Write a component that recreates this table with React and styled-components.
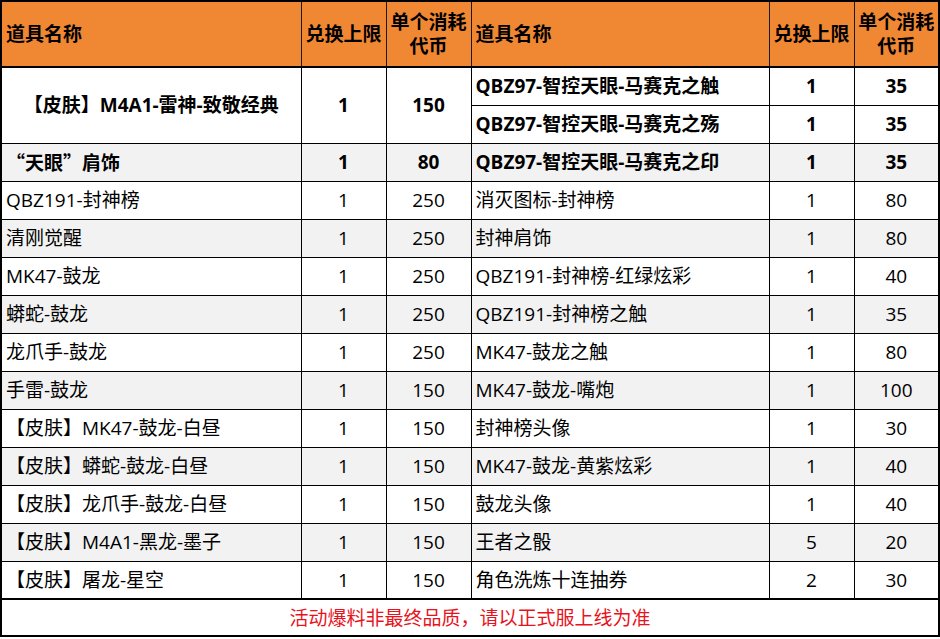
import React from 'react';
import styled, { createGlobalStyle } from 'styled-components';

const GlobalStyle = createGlobalStyle`
  html, body {
    margin: 0;
    padding: 0;
    background: #ffffff;
  }
  body {
    font-family: "Open Sans", "Noto Sans CJK SC", sans-serif;
    color: #000;
  }
`;

const Table = styled.table`
  width: 938px;
  table-layout: fixed;
  border-collapse: collapse;
  border: 2px solid #000;
  font-size: 19px;
  line-height: 22px;
`;

const HeadCell = styled.th`
  background-color: #ef8733;
  border: 1px solid #1a1a1a;
  border-bottom: 2px solid #000;
  height: 64px;
  padding: 0 ${props => (props.$left ? '4px' : '1px')};
  font-weight: 700;
  text-align: ${props => (props.$left ? 'left' : 'center')};
  vertical-align: middle;
  line-height: 24px;
  white-space: nowrap;
`;

const Row = styled.tr`
  height: 38px;
`;

const Cell = styled.td`
  border: 1px solid #000;
  padding: 0 ${props => (props.$center ? '2px' : '4px')};
  background-color: ${props => (props.$gray ? '#f2f2f2' : '#ffffff')};
  font-weight: ${props => (props.$bold ? 700 : 400)};
  text-align: ${props => (props.$center || props.$mid ? 'center' : 'left')};
  vertical-align: middle;
  white-space: nowrap;
  overflow: hidden;
`;

// full-width CJK quotes, as in the source sheet
const CjkText = styled.span`
  font-family: "Noto Sans CJK SC", sans-serif;
`;

const NoteRow = styled.tr`
  height: 37px;
`;

const NoteCell = styled.td`
  border-top: 2px solid #000;
  color: #e8121c;
  text-align: center;
  vertical-align: middle;
  font-size: 19px;
`;

const left = [
  { name: '【皮肤】M4A1-雷神-致敬经典', limit: 1, cost: 150, bold: true, span: 2 },
  null,
  { name: '“天眼”肩饰', limit: 1, cost: 80, bold: true, cjk: true },
  { name: 'QBZ191-封神榜', limit: 1, cost: 250 },
  { name: '清刚觉醒', limit: 1, cost: 250 },
  { name: 'MK47-鼓龙', limit: 1, cost: 250 },
  { name: '蟒蛇-鼓龙', limit: 1, cost: 250 },
  { name: '龙爪手-鼓龙', limit: 1, cost: 250 },
  { name: '手雷-鼓龙', limit: 1, cost: 150 },
  { name: '【皮肤】MK47-鼓龙-白昼', limit: 1, cost: 150 },
  { name: '【皮肤】蟒蛇-鼓龙-白昼', limit: 1, cost: 150 },
  { name: '【皮肤】龙爪手-鼓龙-白昼', limit: 1, cost: 150 },
  { name: '【皮肤】M4A1-黑龙-墨子', limit: 1, cost: 150 },
  { name: '【皮肤】屠龙-星空', limit: 1, cost: 150 },
];

const right = [
  { name: 'QBZ97-智控天眼-马赛克之触', limit: 1, cost: 35, bold: true },
  { name: 'QBZ97-智控天眼-马赛克之殇', limit: 1, cost: 35, bold: true },
  { name: 'QBZ97-智控天眼-马赛克之印', limit: 1, cost: 35, bold: true },
  { name: '消灭图标-封神榜', limit: 1, cost: 80 },
  { name: '封神肩饰', limit: 1, cost: 80 },
  { name: 'QBZ191-封神榜-红绿炫彩', limit: 1, cost: 40 },
  { name: 'QBZ191-封神榜之触', limit: 1, cost: 35 },
  { name: 'MK47-鼓龙之触', limit: 1, cost: 80 },
  { name: 'MK47-鼓龙-嘴炮', limit: 1, cost: 100 },
  { name: '封神榜头像', limit: 1, cost: 30 },
  { name: 'MK47-鼓龙-黄紫炫彩', limit: 1, cost: 40 },
  { name: '鼓龙头像', limit: 1, cost: 40 },
  { name: '王者之骰', limit: 5, cost: 20 },
  { name: '角色洗炼十连抽券', limit: 2, cost: 30 },
];

const renderItem = (item, gray, key) => {
  if (!item) return null;
  return [
    <Cell key={key + 'n'} rowSpan={item.span} $gray={gray} $bold={item.bold} $mid={item.span > 1}>
      {item.cjk ? <CjkText>{item.name}</CjkText> : item.name}
    </Cell>,
    <Cell key={key + 'l'} rowSpan={item.span} $gray={gray} $bold={item.bold} $center>
      {item.limit}
    </Cell>,
    <Cell key={key + 'c'} rowSpan={item.span} $gray={gray} $bold={item.bold} $center>
      {item.cost}
    </Cell>,
  ];
};

const App = () => (
  <>
    <GlobalStyle />
    <Table>
      <colgroup>
        <col style={{ width: 300 }} />
        <col style={{ width: 85 }} />
        <col style={{ width: 85 }} />
        <col style={{ width: 298 }} />
        <col style={{ width: 85 }} />
        <col style={{ width: 85 }} />
      </colgroup>
      <thead>
        <tr>
          <HeadCell $left>道具名称</HeadCell>
          <HeadCell>兑换上限</HeadCell>
          <HeadCell>单个消耗<br />代币</HeadCell>
          <HeadCell $left>道具名称</HeadCell>
          <HeadCell>兑换上限</HeadCell>
          <HeadCell>单个消耗<br />代币</HeadCell>
        </tr>
      </thead>
      <tbody>
        {right.map((r, i) => {
          const gray = i >= 2 && i % 2 === 0;
          return (
            <Row key={i}>
              {renderItem(left[i], gray, 'L' + i)}
              {renderItem(r, gray, 'R' + i)}
            </Row>
          );
        })}
        <NoteRow>
          <NoteCell colSpan={6}>活动爆料非最终品质，请以正式服上线为准</NoteCell>
        </NoteRow>
      </tbody>
    </Table>
  </>
);

export default App;
